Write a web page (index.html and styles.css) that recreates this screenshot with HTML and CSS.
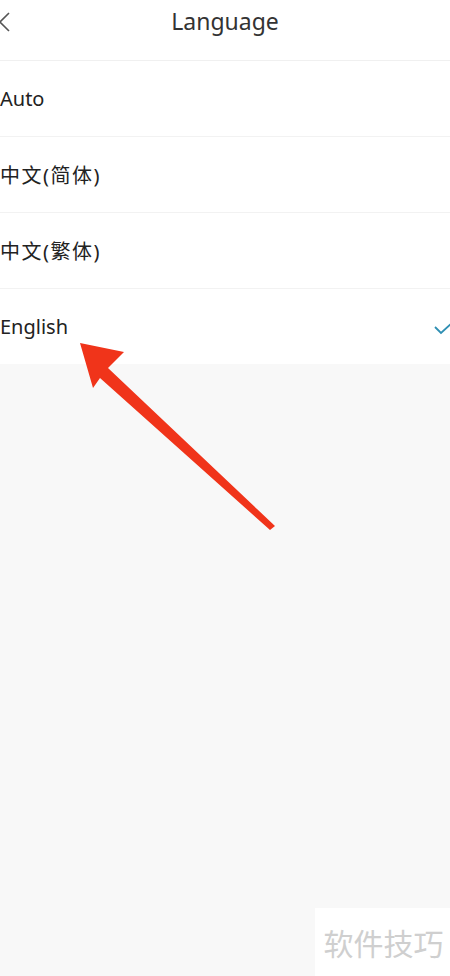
FILE: index.html
```html
<!DOCTYPE html>
<html lang="en">

<head>
    <meta charset="UTF-8">
    <meta name="viewport" content="width=device-width, initial-scale=1.0">
    <title>Language</title>
    <link rel="stylesheet" href="styles.css">
</head>

<body>
    <div class="screen">
        <header class="header">
            <svg class="back" width="12" height="22" viewBox="0 0 12 22">
                <path d="M10 2 L1 11 L10 20" fill="none" stroke="#555" stroke-width="1.6" />
            </svg>
            <h1 class="title">Language</h1>
        </header>

        <ul class="list">
            <li class="item">Auto</li>
            <li class="item cjk">中文(简体)</li>
            <li class="item cjk">中文(繁体)</li>
            <li class="item selected">
                <span>English</span>
                <svg class="check" width="20" height="14" viewBox="0 0 20 14">
                    <path d="M1 6 L7 12 L19 1" fill="none" stroke="#2f8fb3" stroke-width="1.8" />
                </svg>
            </li>
        </ul>

        <div class="rest"></div>

        <!-- annotation arrow -->
        <svg class="arrow" width="450" height="976" viewBox="0 0 450 976">
            <polygon points="80,343 124,352 108,368 275,526 270,530 100,378 93,388" fill="#f0341a" />
        </svg>

        <div class="watermark">软件技巧</div>
    </div>
</body>

</html>
```

FILE: styles.css
```css
body {
    margin: 0;
    font-family: "Noto Sans", "Noto Sans CJK SC", sans-serif;
    color: #222;
}

.screen {
    position: relative;
    width: 450px;
    height: 976px;
    overflow: hidden;
    background-color: #f8f8f8;
    display: flex;
    flex-direction: column;
}

.header {
    height: 60px;
    background-color: #fff;
    border-bottom: 1px solid #f0f0f0;
    display: flex;
    align-items: center;
    justify-content: center;
    position: relative;
}

.back {
    position: absolute;
    left: -1px;
    top: 11px;
}

.title {
    margin: 0;
    font-size: 23px;
    font-weight: normal;
    color: #333;
    padding-bottom: 18px;
}

.list {
    list-style: none;
    margin: 0;
    padding: 0;
    background-color: #fff;
}

.item {
    height: 75px;
    display: flex;
    align-items: center;
    justify-content: space-between;
    font-size: 20px;
    border-bottom: 1px solid #f2f2f2;
}

.item.cjk {
    letter-spacing: 1.5px;
}

.item.selected {
    border-bottom: none;
    margin-right: -4px;
}

.check {
    margin-top: 2px;
}

.rest {
    flex: 1;
}

.arrow {
    position: absolute;
    left: 0;
    top: 0;
}

.watermark {
    position: absolute;
    right: 0;
    bottom: 0;
    width: 135px;
    height: 68px;
    background-color: #fff;
    color: #cfcfcf;
    font-size: 30px;
    display: flex;
    align-items: center;
    justify-content: center;
    padding-left: 2px;
    box-sizing: border-box;
}
```
